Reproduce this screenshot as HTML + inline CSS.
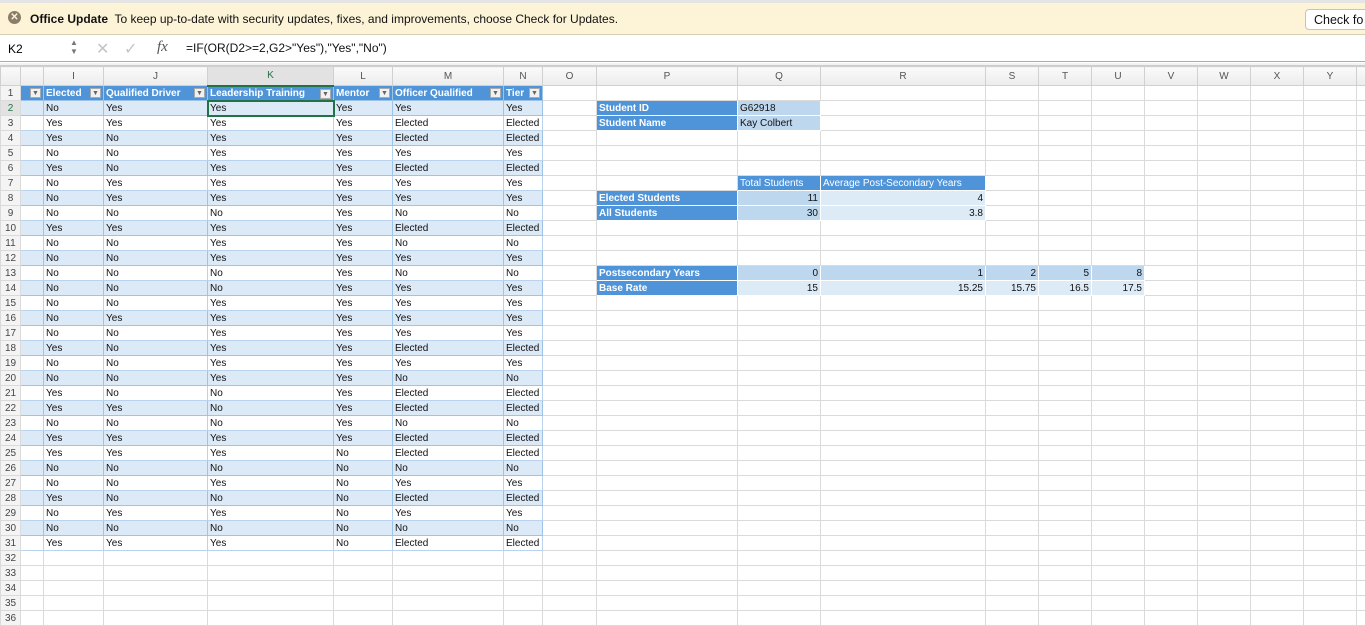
<!DOCTYPE html>
<html><head><meta charset="utf-8">
<style>
*{box-sizing:border-box;margin:0;padding:0}
body{width:1365px;height:615px;overflow:hidden;background:#fff;font-family:"Liberation Sans",sans-serif;position:relative}
#nb{position:absolute;left:0;top:0;width:1365px;height:35px;background:#fdf4d8;border-top:3px solid #e4e4e4;border-bottom:1px solid #d6cfb8}
#nb .x{position:absolute;left:8px;top:8px;width:13px;height:13px;border-radius:50%;background:#8a7d6a;color:#fdf4d8;font-size:10px;line-height:13px;text-align:center;font-weight:bold}
#nb .t{position:absolute;left:30px;top:9px;font-size:12px;color:#111}
#nb .btn{position:absolute;left:1305px;top:6px;width:80px;height:21px;border:1px solid #c3c3c3;border-radius:4px;background:#fff;font-size:12.5px;padding:3px 8px;color:#111}
#fb{position:absolute;left:0;top:35px;width:1365px;height:27px;background:#fff;border-bottom:1px solid #aaa}
#fb .nm{position:absolute;left:8px;top:7px;font-size:12px}
#fb .sp{position:absolute;left:70px;top:3px;font-size:8px;color:#777;line-height:9px}
#fb .ic{position:absolute;top:4px;font-size:16px;color:#c4c4c4}
#fb .f{position:absolute;left:186px;top:6px;font-size:12px;color:#111}
#dl{position:absolute;left:0;top:63px;width:1365px;height:3px;border-bottom:1px solid #ccc;background:#f2f2f2}
table{position:absolute;left:0;top:66px;border-collapse:collapse;table-layout:fixed;font-size:10px;width:1376px}
td{height:15px;border:1px solid #dadada;padding:0 2px;white-space:nowrap;overflow:hidden;line-height:13px;color:#111}
tr.h td{height:19px;background:linear-gradient(#fafafa,#ececec);color:#555;text-align:center;font-size:10px;border-color:#d0d0d0}
td.r{background:#f4f4f4;color:#444;text-align:center;padding:0}
.th{background:#4f94d8;color:#fff;font-weight:bold;position:relative;border-color:#9dc3e6}
.b{background:#dce9f7;border-color:#9dc3e6}
.w{border-color:#b9d3ee}
.fl{position:absolute;right:2px;top:2px;width:11px;height:10px;background:#f1f1f1;border:1px solid #aaa;color:#666;font-size:7px;line-height:9px;text-align:center}
.hb{background:#4f94d8;color:#fff;font-weight:bold;border-color:#fff}
.m{background:#bdd7ee;text-align:right;border-color:#fff}
.l{background:#ddebf7;text-align:right;border-color:#fff}
.ml{background:#bdd7ee;border-color:#fff}
.hd{background:#4f94d8;color:#fff;border-color:#fff}
.sel{outline:2px solid #217346;outline-offset:-1px}
</style></head><body>
<div id="nb"><div class="x">✕</div><div class="t"><b>Office Update</b>&nbsp; To keep up-to-date with security updates, fixes, and improvements, choose Check for Updates.</div><div class="btn">Check fo</div></div>
<div id="fb"><div class="nm">K2</div><div class="sp">▲<br>▼</div><div class="ic" style="left:96px">✕</div><div class="ic" style="left:124px">✓</div><div class="ic" style="left:157px;color:#555;font-style:italic;font-family:'Liberation Serif',serif;font-size:15px">fx</div><div class="f">=IF(OR(D2&gt;=2,G2&gt;"Yes"),"Yes","No")</div></div>
<div id="dl"></div>
<table>
<colgroup><col style="width:20px"><col style="width:23px"><col style="width:60px"><col style="width:104px"><col style="width:126px"><col style="width:59px"><col style="width:111px"><col style="width:39px"><col style="width:54px"><col style="width:141px"><col style="width:83px"><col style="width:165px"><col style="width:53px"><col style="width:53px"><col style="width:53px"><col style="width:53px"><col style="width:53px"><col style="width:53px"><col style="width:53px"><col style="width:20px"></colgroup>
<tr class="h"><td></td><td></td><td>I</td><td>J</td><td style="color:#217346;border-bottom:2px solid #217346;background:#e2e2e2">K</td><td>L</td><td>M</td><td>N</td><td>O</td><td>P</td><td>Q</td><td>R</td><td>S</td><td>T</td><td>U</td><td>V</td><td>W</td><td>X</td><td>Y</td><td></td></tr>
<tr><td class="r">1</td><td class="th"><span class="fl">▼</span></td><td class="th">Elected<span class="fl">▼</span></td><td class="th">Qualified Driver<span class="fl">▼</span></td><td class="th">Leadership Training<span class="fl">▼</span></td><td class="th">Mentor<span class="fl">▼</span></td><td class="th">Officer Qualified<span class="fl">▼</span></td><td class="th">Tier<span class="fl">▼</span></td><td></td><td></td><td></td><td></td><td></td><td></td><td></td><td></td><td></td><td></td><td></td><td></td></tr>
<tr><td class="r" style="color:#217346;background:#e2e2e2">2</td><td class="b"></td><td class="b">No</td><td class="b">Yes</td><td class="b sel">Yes</td><td class="b">Yes</td><td class="b">Yes</td><td class="b">Yes</td><td></td><td class="hb">Student ID</td><td class="ml">G62918</td><td></td><td></td><td></td><td></td><td></td><td></td><td></td><td></td><td></td></tr>
<tr><td class="r">3</td><td class="w"></td><td class="w">Yes</td><td class="w">Yes</td><td class="w">Yes</td><td class="w">Yes</td><td class="w">Elected</td><td class="w">Elected</td><td></td><td class="hb">Student Name</td><td class="ml">Kay Colbert</td><td></td><td></td><td></td><td></td><td></td><td></td><td></td><td></td><td></td></tr>
<tr><td class="r">4</td><td class="b"></td><td class="b">Yes</td><td class="b">No</td><td class="b">Yes</td><td class="b">Yes</td><td class="b">Elected</td><td class="b">Elected</td><td></td><td></td><td></td><td></td><td></td><td></td><td></td><td></td><td></td><td></td><td></td><td></td></tr>
<tr><td class="r">5</td><td class="w"></td><td class="w">No</td><td class="w">No</td><td class="w">Yes</td><td class="w">Yes</td><td class="w">Yes</td><td class="w">Yes</td><td></td><td></td><td></td><td></td><td></td><td></td><td></td><td></td><td></td><td></td><td></td><td></td></tr>
<tr><td class="r">6</td><td class="b"></td><td class="b">Yes</td><td class="b">No</td><td class="b">Yes</td><td class="b">Yes</td><td class="b">Elected</td><td class="b">Elected</td><td></td><td></td><td></td><td></td><td></td><td></td><td></td><td></td><td></td><td></td><td></td><td></td></tr>
<tr><td class="r">7</td><td class="w"></td><td class="w">No</td><td class="w">Yes</td><td class="w">Yes</td><td class="w">Yes</td><td class="w">Yes</td><td class="w">Yes</td><td></td><td></td><td class="hd">Total Students</td><td class="hd">Average Post-Secondary Years</td><td></td><td></td><td></td><td></td><td></td><td></td><td></td><td></td></tr>
<tr><td class="r">8</td><td class="b"></td><td class="b">No</td><td class="b">Yes</td><td class="b">Yes</td><td class="b">Yes</td><td class="b">Yes</td><td class="b">Yes</td><td></td><td class="hb">Elected Students</td><td class="m">11</td><td class="l">4</td><td></td><td></td><td></td><td></td><td></td><td></td><td></td><td></td></tr>
<tr><td class="r">9</td><td class="w"></td><td class="w">No</td><td class="w">No</td><td class="w">No</td><td class="w">Yes</td><td class="w">No</td><td class="w">No</td><td></td><td class="hb">All Students</td><td class="m">30</td><td class="l">3.8</td><td></td><td></td><td></td><td></td><td></td><td></td><td></td><td></td></tr>
<tr><td class="r">10</td><td class="b"></td><td class="b">Yes</td><td class="b">Yes</td><td class="b">Yes</td><td class="b">Yes</td><td class="b">Elected</td><td class="b">Elected</td><td></td><td></td><td></td><td></td><td></td><td></td><td></td><td></td><td></td><td></td><td></td><td></td></tr>
<tr><td class="r">11</td><td class="w"></td><td class="w">No</td><td class="w">No</td><td class="w">Yes</td><td class="w">Yes</td><td class="w">No</td><td class="w">No</td><td></td><td></td><td></td><td></td><td></td><td></td><td></td><td></td><td></td><td></td><td></td><td></td></tr>
<tr><td class="r">12</td><td class="b"></td><td class="b">No</td><td class="b">No</td><td class="b">Yes</td><td class="b">Yes</td><td class="b">Yes</td><td class="b">Yes</td><td></td><td></td><td></td><td></td><td></td><td></td><td></td><td></td><td></td><td></td><td></td><td></td></tr>
<tr><td class="r">13</td><td class="w"></td><td class="w">No</td><td class="w">No</td><td class="w">No</td><td class="w">Yes</td><td class="w">No</td><td class="w">No</td><td></td><td class="hb">Postsecondary Years</td><td class="m">0</td><td class="m">1</td><td class="m">2</td><td class="m">5</td><td class="m">8</td><td></td><td></td><td></td><td></td><td></td></tr>
<tr><td class="r">14</td><td class="b"></td><td class="b">No</td><td class="b">No</td><td class="b">No</td><td class="b">Yes</td><td class="b">Yes</td><td class="b">Yes</td><td></td><td class="hb">Base Rate</td><td class="l">15</td><td class="l">15.25</td><td class="l">15.75</td><td class="l">16.5</td><td class="l">17.5</td><td></td><td></td><td></td><td></td><td></td></tr>
<tr><td class="r">15</td><td class="w"></td><td class="w">No</td><td class="w">No</td><td class="w">Yes</td><td class="w">Yes</td><td class="w">Yes</td><td class="w">Yes</td><td></td><td></td><td></td><td></td><td></td><td></td><td></td><td></td><td></td><td></td><td></td><td></td></tr>
<tr><td class="r">16</td><td class="b"></td><td class="b">No</td><td class="b">Yes</td><td class="b">Yes</td><td class="b">Yes</td><td class="b">Yes</td><td class="b">Yes</td><td></td><td></td><td></td><td></td><td></td><td></td><td></td><td></td><td></td><td></td><td></td><td></td></tr>
<tr><td class="r">17</td><td class="w"></td><td class="w">No</td><td class="w">No</td><td class="w">Yes</td><td class="w">Yes</td><td class="w">Yes</td><td class="w">Yes</td><td></td><td></td><td></td><td></td><td></td><td></td><td></td><td></td><td></td><td></td><td></td><td></td></tr>
<tr><td class="r">18</td><td class="b"></td><td class="b">Yes</td><td class="b">No</td><td class="b">Yes</td><td class="b">Yes</td><td class="b">Elected</td><td class="b">Elected</td><td></td><td></td><td></td><td></td><td></td><td></td><td></td><td></td><td></td><td></td><td></td><td></td></tr>
<tr><td class="r">19</td><td class="w"></td><td class="w">No</td><td class="w">No</td><td class="w">Yes</td><td class="w">Yes</td><td class="w">Yes</td><td class="w">Yes</td><td></td><td></td><td></td><td></td><td></td><td></td><td></td><td></td><td></td><td></td><td></td><td></td></tr>
<tr><td class="r">20</td><td class="b"></td><td class="b">No</td><td class="b">No</td><td class="b">Yes</td><td class="b">Yes</td><td class="b">No</td><td class="b">No</td><td></td><td></td><td></td><td></td><td></td><td></td><td></td><td></td><td></td><td></td><td></td><td></td></tr>
<tr><td class="r">21</td><td class="w"></td><td class="w">Yes</td><td class="w">No</td><td class="w">No</td><td class="w">Yes</td><td class="w">Elected</td><td class="w">Elected</td><td></td><td></td><td></td><td></td><td></td><td></td><td></td><td></td><td></td><td></td><td></td><td></td></tr>
<tr><td class="r">22</td><td class="b"></td><td class="b">Yes</td><td class="b">Yes</td><td class="b">No</td><td class="b">Yes</td><td class="b">Elected</td><td class="b">Elected</td><td></td><td></td><td></td><td></td><td></td><td></td><td></td><td></td><td></td><td></td><td></td><td></td></tr>
<tr><td class="r">23</td><td class="w"></td><td class="w">No</td><td class="w">No</td><td class="w">No</td><td class="w">Yes</td><td class="w">No</td><td class="w">No</td><td></td><td></td><td></td><td></td><td></td><td></td><td></td><td></td><td></td><td></td><td></td><td></td></tr>
<tr><td class="r">24</td><td class="b"></td><td class="b">Yes</td><td class="b">Yes</td><td class="b">Yes</td><td class="b">Yes</td><td class="b">Elected</td><td class="b">Elected</td><td></td><td></td><td></td><td></td><td></td><td></td><td></td><td></td><td></td><td></td><td></td><td></td></tr>
<tr><td class="r">25</td><td class="w"></td><td class="w">Yes</td><td class="w">Yes</td><td class="w">Yes</td><td class="w">No</td><td class="w">Elected</td><td class="w">Elected</td><td></td><td></td><td></td><td></td><td></td><td></td><td></td><td></td><td></td><td></td><td></td><td></td></tr>
<tr><td class="r">26</td><td class="b"></td><td class="b">No</td><td class="b">No</td><td class="b">No</td><td class="b">No</td><td class="b">No</td><td class="b">No</td><td></td><td></td><td></td><td></td><td></td><td></td><td></td><td></td><td></td><td></td><td></td><td></td></tr>
<tr><td class="r">27</td><td class="w"></td><td class="w">No</td><td class="w">No</td><td class="w">Yes</td><td class="w">No</td><td class="w">Yes</td><td class="w">Yes</td><td></td><td></td><td></td><td></td><td></td><td></td><td></td><td></td><td></td><td></td><td></td><td></td></tr>
<tr><td class="r">28</td><td class="b"></td><td class="b">Yes</td><td class="b">No</td><td class="b">No</td><td class="b">No</td><td class="b">Elected</td><td class="b">Elected</td><td></td><td></td><td></td><td></td><td></td><td></td><td></td><td></td><td></td><td></td><td></td><td></td></tr>
<tr><td class="r">29</td><td class="w"></td><td class="w">No</td><td class="w">Yes</td><td class="w">Yes</td><td class="w">No</td><td class="w">Yes</td><td class="w">Yes</td><td></td><td></td><td></td><td></td><td></td><td></td><td></td><td></td><td></td><td></td><td></td><td></td></tr>
<tr><td class="r">30</td><td class="b"></td><td class="b">No</td><td class="b">No</td><td class="b">No</td><td class="b">No</td><td class="b">No</td><td class="b">No</td><td></td><td></td><td></td><td></td><td></td><td></td><td></td><td></td><td></td><td></td><td></td><td></td></tr>
<tr><td class="r">31</td><td class="w"></td><td class="w">Yes</td><td class="w">Yes</td><td class="w">Yes</td><td class="w">No</td><td class="w">Elected</td><td class="w">Elected</td><td></td><td></td><td></td><td></td><td></td><td></td><td></td><td></td><td></td><td></td><td></td><td></td></tr>
<tr><td class="r">32</td><td></td><td></td><td></td><td></td><td></td><td></td><td></td><td></td><td></td><td></td><td></td><td></td><td></td><td></td><td></td><td></td><td></td><td></td><td></td></tr>
<tr><td class="r">33</td><td></td><td></td><td></td><td></td><td></td><td></td><td></td><td></td><td></td><td></td><td></td><td></td><td></td><td></td><td></td><td></td><td></td><td></td><td></td></tr>
<tr><td class="r">34</td><td></td><td></td><td></td><td></td><td></td><td></td><td></td><td></td><td></td><td></td><td></td><td></td><td></td><td></td><td></td><td></td><td></td><td></td><td></td></tr>
<tr><td class="r">35</td><td></td><td></td><td></td><td></td><td></td><td></td><td></td><td></td><td></td><td></td><td></td><td></td><td></td><td></td><td></td><td></td><td></td><td></td><td></td></tr>
<tr><td class="r">36</td><td></td><td></td><td></td><td></td><td></td><td></td><td></td><td></td><td></td><td></td><td></td><td></td><td></td><td></td><td></td><td></td><td></td><td></td><td></td></tr>
</table>
</body></html>
